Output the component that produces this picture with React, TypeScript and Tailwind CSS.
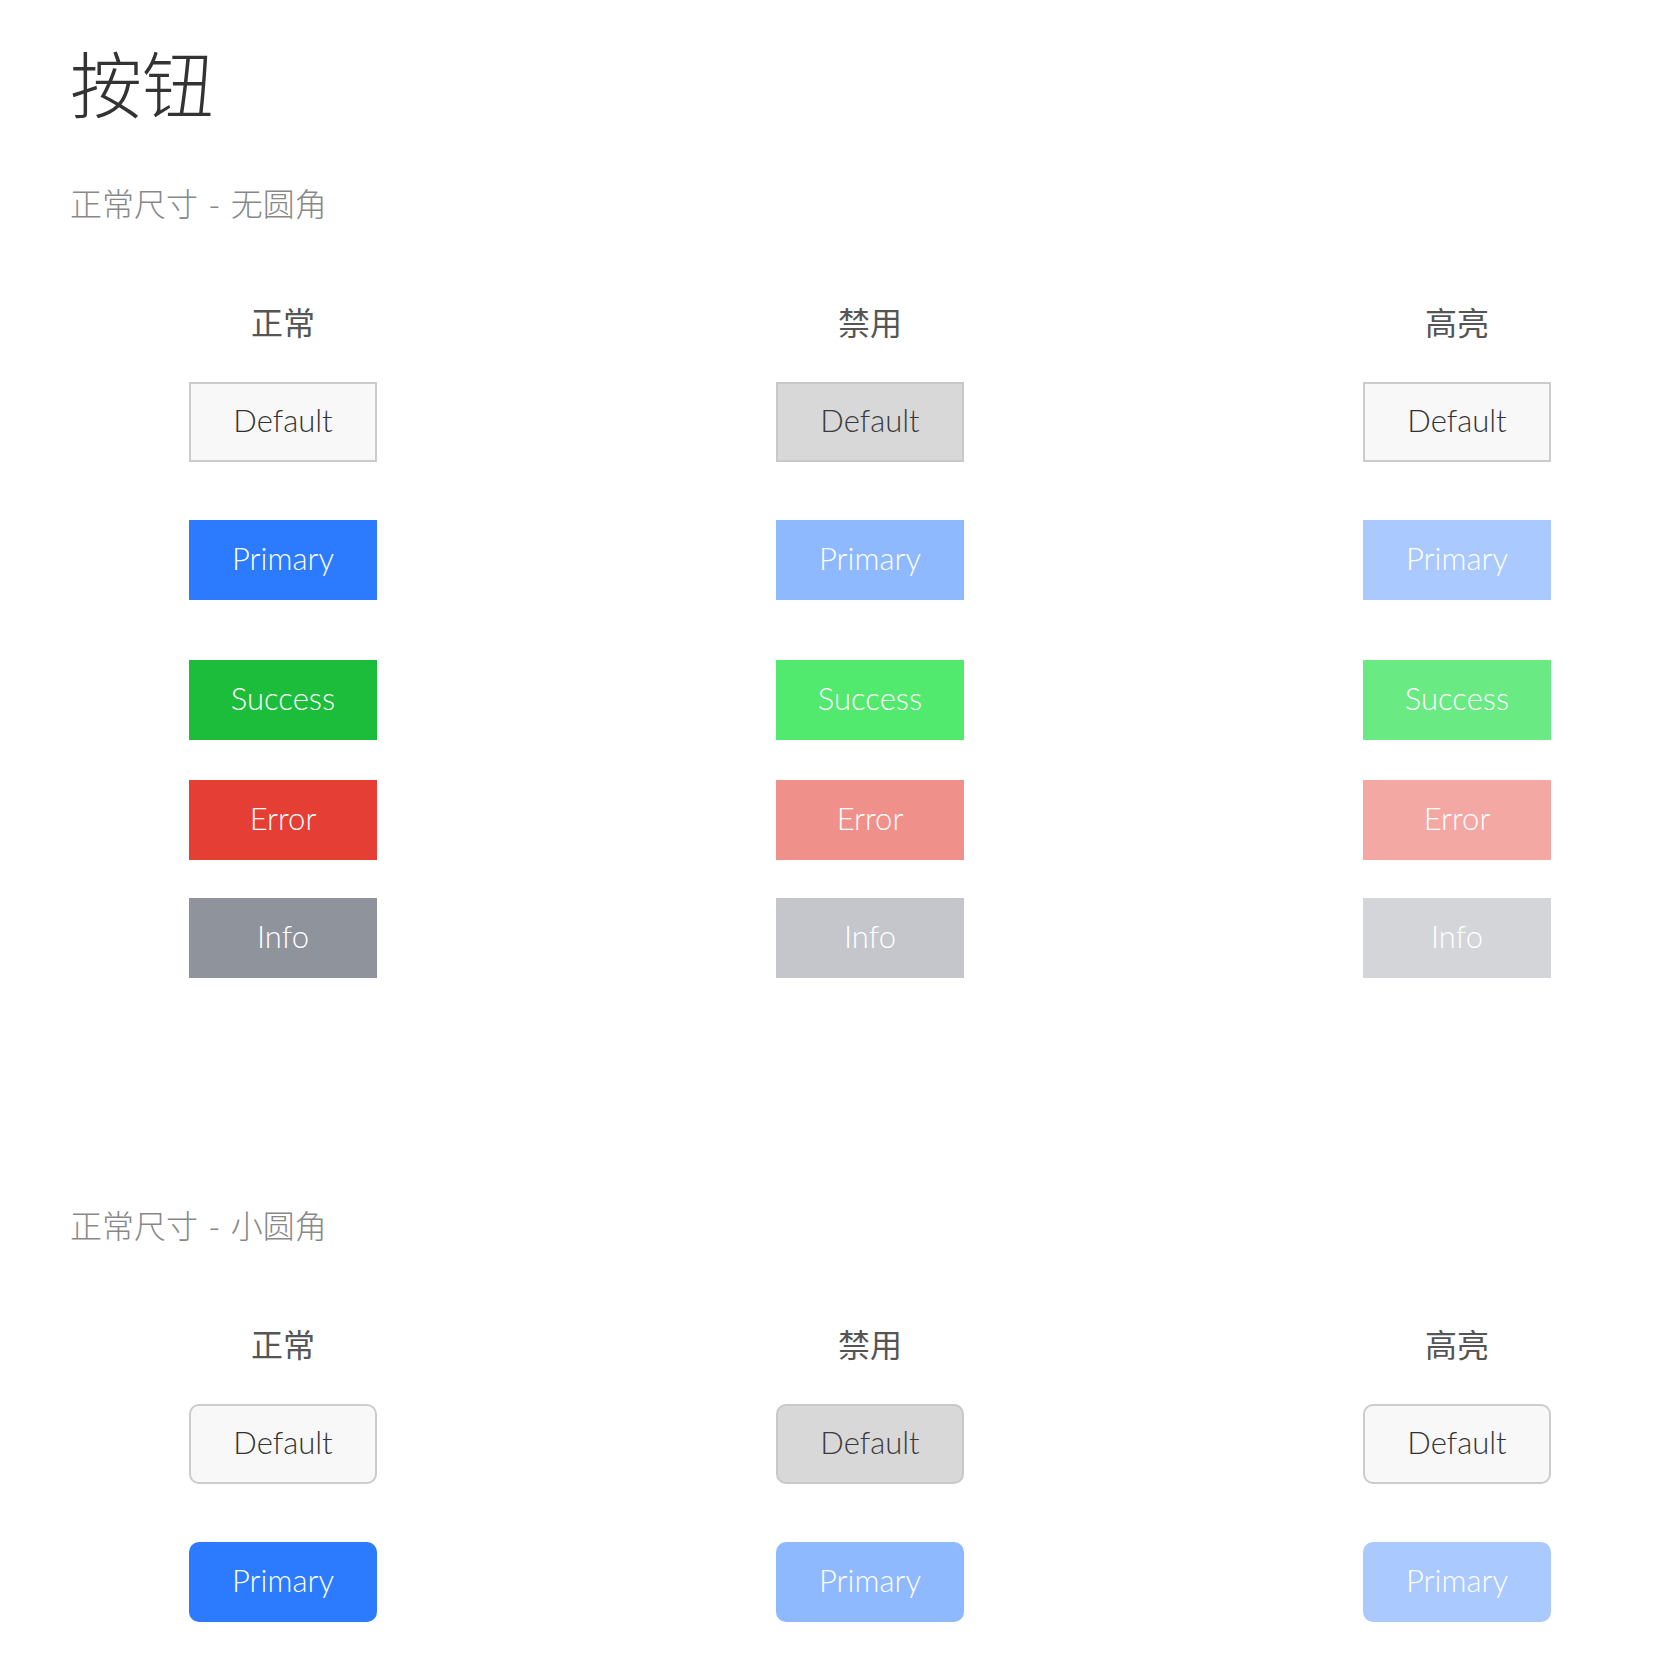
import React from 'react';

type Variant = 'default' | 'primary' | 'success' | 'error' | 'info';
type State = 'normal' | 'disabled' | 'highlight';

const labels: Record<Variant, string> = {
  default: 'Default',
  primary: 'Primary',
  success: 'Success',
  error: 'Error',
  info: 'Info',
};

const styles: Record<State, Record<Variant, string>> = {
  normal: {
    default: 'bg-[#f8f8f8] border-2 border-[#cccccc] text-[#333333]',
    primary: 'bg-[#2c7bff] text-white',
    success: 'bg-[#1bbd3a] text-white',
    error: 'bg-[#e43e35] text-white',
    info: 'bg-[#8f939b] text-white',
  },
  disabled: {
    default: 'bg-[#d8d8d8] border-2 border-[#c8c8c8] text-[#3a3a3a]',
    primary: 'bg-[#8fb9fe] text-white',
    success: 'bg-[#52e96f] text-white',
    error: 'bg-[#ef918a] text-white',
    info: 'bg-[#c5c6cb] text-white',
  },
  highlight: {
    default: 'bg-[#f8f8f8] border-2 border-[#cccccc] text-[#333333]',
    primary: 'bg-[#aac9fe] text-white',
    success: 'bg-[#69ea82] text-white',
    error: 'bg-[#f3a8a3] text-white',
    info: 'bg-[#d4d5d9] text-white',
  },
};

// vertical spacing before each button (first one follows the column title)
const gaps: Record<Variant, string> = {
  default: 'mt-[45px]',
  primary: 'mt-[58px]',
  success: 'mt-[60px]',
  error: 'mt-[40px]',
  info: 'mt-[38px]',
};

const columns: { state: State; title: string }[] = [
  { state: 'normal', title: '正常' },
  { state: 'disabled', title: '禁用' },
  { state: 'highlight', title: '高亮' },
];

const Button: React.FC<{ variant: Variant; state: State; rounded: boolean }> = ({ variant, state, rounded }) => (
  <button
    disabled={state === 'disabled'}
    className={`${gaps[variant]} ${styles[state][variant]} ${rounded ? 'rounded-[10px]' : ''} w-[188px] h-[80px] pb-[3px] flex items-center justify-center text-[31px] font-light leading-none font-['Lato','Noto_Sans_CJK_SC',sans-serif]`}
  >
    {labels[variant]}
  </button>
);

const Section: React.FC<{ title: string; sub: string; rounded: boolean; variants: Variant[] }> = ({ title, sub, rounded, variants }) => (
  <section>
    <h2 className="pl-[70px] text-[32px] leading-none font-light text-[#888888]">
      {title}
      <span className="mx-[4px]"> - </span>
      {sub}
    </h2>
    <div className="mt-[87px] flex gap-[399px] pl-[189px]">
      {columns.map((col) => (
        <div key={col.state} className="w-[188px] flex flex-col items-center">
          <h3 className="text-[32px] leading-none font-normal text-[#555555] whitespace-nowrap">{col.title}</h3>
          {variants.map((v) => (
            <Button key={v} variant={v} state={col.state} rounded={rounded} />
          ))}
        </div>
      ))}
    </div>
  </section>
);

export default function App() {
  return (
    <div className="h-[1668px] overflow-hidden bg-white font-['Noto_Sans_CJK_SC',sans-serif]">
      <h1 className="pl-[70px] pt-[45px] text-[72px] leading-none font-light text-[#333333]">按钮</h1>
      <div className="mt-[69px]">
        <Section title="正常尺寸" sub="无圆角" rounded={false} variants={['default', 'primary', 'success', 'error', 'info']} />
      </div>
      <div className="mt-[230px]">
        <Section title="正常尺寸" sub="小圆角" rounded={true} variants={['default', 'primary']} />
      </div>
    </div>
  );
}
